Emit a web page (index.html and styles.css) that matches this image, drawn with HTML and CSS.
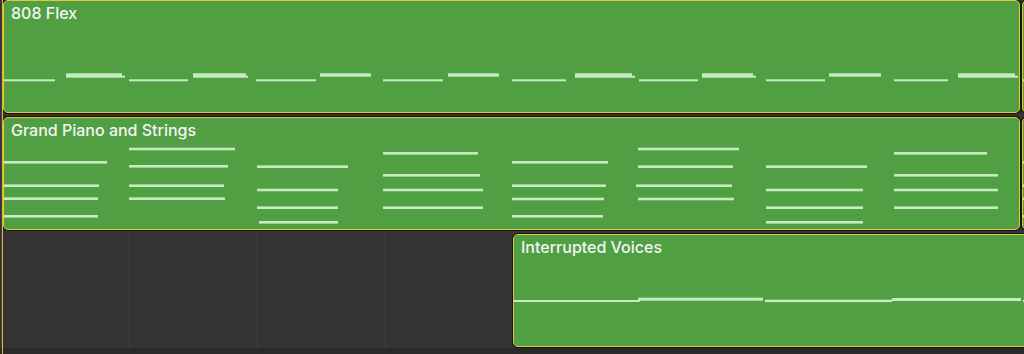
FILE: index.html
```html
<!DOCTYPE html>
<html>
  <head>
    <meta charset="utf-8">
    <title>Tracks</title>
    <link rel="stylesheet" href="styles.css">
  </head>
  <body>
    <div class="arrange">
      <div class="playhead"></div>

      <!-- track 1 -->
      <div class="lane lane-first">
        <div class="region region-long">
          <span class="region-name">808 Flex</span>
          <svg class="notes" width="1015" height="111">
            <rect x="0" y="78.3" width="51" height="2"/>
            <rect x="125" y="78.3" width="59" height="2"/>
            <rect x="252" y="78.3" width="60" height="2"/>
            <rect x="379" y="78.3" width="60" height="2"/>
            <rect x="508" y="78.3" width="54" height="2"/>
            <rect x="635" y="78.3" width="59" height="2"/>
            <rect x="762" y="78.3" width="59" height="2"/>
            <rect x="890" y="78.3" width="54" height="2"/>

            <rect x="62" y="72.3" width="56" height="3.4"/>
            <rect x="62" y="74.7" width="59" height="2"/>
            <rect x="189" y="72.3" width="53" height="3.4"/>
            <rect x="189" y="74.7" width="55" height="2"/>
            <rect x="316" y="72.3" width="51" height="3.4"/>
            <rect x="444" y="72.3" width="51" height="3.4"/>
            <rect x="571" y="72.3" width="57" height="3.4"/>
            <rect x="571" y="74.7" width="60" height="2"/>
            <rect x="698" y="72.3" width="51" height="3.4"/>
            <rect x="698" y="74.7" width="54" height="2"/>
            <rect x="825" y="72.3" width="52" height="3.4"/>
            <rect x="954" y="72.3" width="57" height="3.4"/>
            <rect x="954" y="74.7" width="60" height="2"/>
          </svg>
        </div>
        <div class="region region-stub">
          <svg class="notes" width="10" height="111">
            <rect x="0" y="78.3" width="10" height="2"/>
          </svg>
        </div>
      </div>

      <!-- track 2 -->
      <div class="lane">
        <div class="region region-long">
          <span class="region-name">Grand Piano and Strings</span>
          <svg class="notes" width="1015" height="111">
            <rect x="0" y="43" width="103" height="2.6"/>
            <rect x="0" y="66.4" width="95" height="2.6"/>
            <rect x="0" y="79.4" width="94" height="2.6"/>
            <rect x="0" y="97" width="94" height="2.6"/>

            <rect x="125" y="29.7" width="106" height="2.6"/>
            <rect x="125" y="47" width="99" height="2.6"/>
            <rect x="125" y="66.4" width="95" height="2.6"/>
            <rect x="125" y="79.4" width="96" height="2.6"/>

            <rect x="253" y="47.4" width="91" height="2.6"/>
            <rect x="253" y="70.7" width="81" height="2.6"/>
            <rect x="253" y="88.4" width="81" height="2.6"/>
            <rect x="255" y="103" width="79" height="2.6"/>

            <rect x="379" y="34" width="95" height="2.6"/>
            <rect x="379" y="56" width="97" height="2.6"/>
            <rect x="379" y="70.7" width="100" height="2.6"/>
            <rect x="379" y="88.4" width="100" height="2.6"/>

            <rect x="508" y="43" width="96" height="2.6"/>
            <rect x="508" y="66.4" width="94" height="2.6"/>
            <rect x="508" y="79.7" width="92" height="2.6"/>
            <rect x="508" y="97" width="91" height="2.6"/>

            <rect x="634" y="29.7" width="101" height="2.6"/>
            <rect x="634" y="47.4" width="95" height="2.6"/>
            <rect x="632" y="66.4" width="96" height="2.6"/>
            <rect x="634" y="79.7" width="96" height="2.6"/>

            <rect x="762" y="47.4" width="101" height="2.6"/>
            <rect x="762" y="70.7" width="97" height="2.6"/>
            <rect x="762" y="88.4" width="97" height="2.6"/>
            <rect x="762" y="103" width="97" height="2.6"/>

            <rect x="890" y="34" width="93" height="2.6"/>
            <rect x="890" y="56" width="104" height="2.6"/>
            <rect x="890" y="70.7" width="104" height="2.6"/>
            <rect x="890" y="88.4" width="104" height="2.6"/>
          </svg>
        </div>
        <div class="region region-stub">
          <svg class="notes" width="10" height="111">
            <rect x="0" y="43" width="10" height="2.6"/>
            <rect x="0" y="66.4" width="10" height="2.6"/>
            <rect x="0" y="79.7" width="10" height="2.6"/>
            <rect x="0" y="97" width="10" height="2.6"/>
          </svg>
        </div>
      </div>

      <!-- track 3 -->
      <div class="lane lane-late">
        <div class="region region-wide">
          <span class="region-name">Interrupted Voices</span>
          <svg class="notes" width="518" height="111">
            <rect x="0" y="65" width="126" height="2"/>
            <rect x="124" y="62.7" width="125" height="3"/>
            <rect x="251" y="64.7" width="127" height="2.4"/>
            <rect x="378" y="63" width="129" height="3"/>
            <rect x="509" y="64.7" width="10" height="2.4"/>
          </svg>
        </div>
      </div>

      <div class="arrange-foot"></div>
    </div>
  </body>
</html>
```

FILE: styles.css
```css
html, body {
    margin: 0;
    padding: 0;
}

body {
    background-color: #333333;
    font-family: 'Inter', 'Noto Sans', 'Liberation Sans', sans-serif;
    overflow: hidden;
}

.arrange {
    position: relative;
    width: 1024px;
    height: 354px;
    overflow: hidden;
    background-color: #333333;
    background-image: repeating-linear-gradient(to right, transparent 0, transparent 127px, #404040 127px, #404040 128px);
    background-position: 2px 0;
}

.playhead {
    position: absolute;
    left: 2px;
    top: 0;
    bottom: 0;
    width: 1px;
    background-color: #dcb92e;
    z-index: 2;
}

.lane {
    display: flex;
    align-items: flex-start;
    gap: 2px;
    height: 116px;
    box-sizing: border-box;
    padding-top: 1px;
    padding-left: 3px;
    overflow: hidden;
}

.lane-first {
    padding-top: 0;
}

.lane-late {
    padding-top: 2px;
    padding-left: 513px;
}

.region {
    position: relative;
    flex-shrink: 0;
    box-sizing: border-box;
    height: 113px;
    background-color: #519f43;
    border: 1px solid #e8c53a;
    border-radius: 5px;
    box-shadow: 0 0 0 1px #151515;
    padding: 3px 7px 0;
    overflow: hidden;
}

.region-long {
    width: 1017px;
}

.region-stub {
    width: 40px;
}

.region-wide {
    width: 540px;
}

.region-name {
    position: relative;
    z-index: 1;
    display: block;
    color: #f4f4f4;
    font-size: 16px;
    font-weight: 500;
    line-height: 18px;
    white-space: nowrap;
}

.notes {
    position: absolute;
    left: 0;
    top: 0;
    fill: #c6ebc1;
}

.arrange-foot {
    height: 6px;
    background-color: #2a2a2a;
}
```
